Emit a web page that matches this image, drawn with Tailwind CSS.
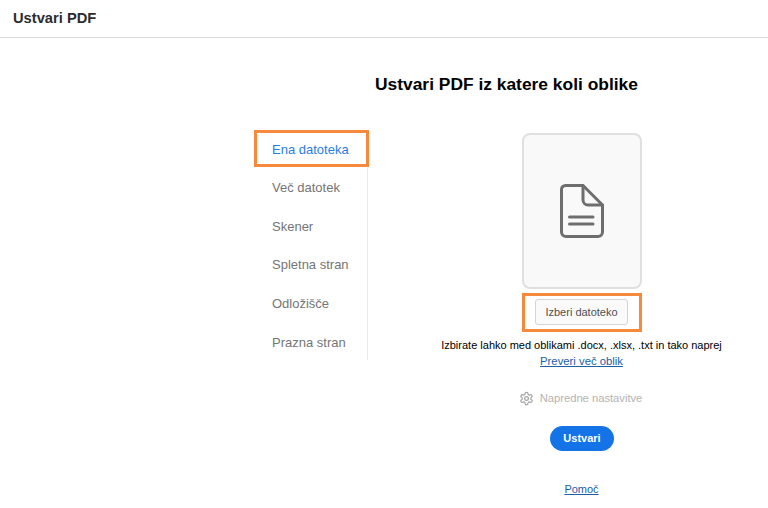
<!DOCTYPE html>
<html lang="sl">

<head>
    <meta charset="UTF-8">
    <title>Ustvari PDF</title>
    <script src="https://cdn.jsdelivr.net/npm/@tailwindcss/browser@4"></script>
</head>

<body class="relative w-[768px] h-[508px] overflow-hidden bg-white font-['Liberation_Sans',sans-serif]">

    <header class="h-[38px] border-b border-[#dcdcdc] pl-[13px] flex items-center">
        <h1 class="text-[14.7px] font-bold text-[#2c2c2c]">Ustvari PDF</h1>
    </header>

    <h2 class="mt-[36px] ml-[375px] text-[17.4px] leading-[20px] font-bold text-black">Ustvari PDF iz katere koli oblike</h2>

    <main class="flex mt-[36px] ml-[254px]">
        <nav class="w-[114px] h-[230px] border-r border-[#e8e8e8] flex flex-col text-[13px] text-[#757575]">
            <a class="h-[38.6px] shrink-0 pl-[18px] flex items-center text-[#2b7de0]">Ena datoteka</a>
            <a class="h-[38.6px] shrink-0 pl-[18px] flex items-center">Več datotek</a>
            <a class="h-[38.6px] shrink-0 pl-[18px] flex items-center">Skener</a>
            <a class="h-[38.6px] shrink-0 pl-[18px] flex items-center">Spletna stran</a>
            <a class="h-[38.6px] shrink-0 pl-[18px] flex items-center">Odložišče</a>
            <a class="h-[38.6px] shrink-0 pl-[18px] flex items-center">Prazna stran</a>
        </nav>

        <section class="w-[300px] ml-[64px] pt-[3px] flex flex-col items-center">
            <div class="w-[120px] h-[156px] rounded-[8px] border-2 border-[#e0e0e0] bg-[#f9f9f9] flex items-center justify-center">
                <svg class="w-[44px] h-[54px]" viewBox="0 0 44 54" fill="none" stroke="#6e6e6e" stroke-width="3" stroke-linejoin="round" stroke-linecap="round">
                    <path d="M5.500 1.500H23L42.500 21V48A4.500 4.500 0 0 1 38 52.500H6A4.500 4.500 0 0 1 1.500 48V5.500A4 4 0 0 1 5.500 1.500Z" />
                    <path d="M23 1.500V16A5 5 0 0 0 28 21H42.500" />
                    <path d="M9.500 33H33M9.500 40H33" />
                </svg>
            </div>
            <button class="mt-[10px] mr-[1px] w-[93px] h-[26px] rounded-[3px] border border-[#d4d4d4] bg-[#fafafa] text-[11px] text-[#505050]">Izberi datoteko</button>
            <p class="mt-[13px] mr-[1px] text-[11px] leading-[14px] text-black whitespace-nowrap">Izbirate lahko med oblikami .docx, .xlsx, .txt in tako naprej</p>
            <a class="mt-[2px] mr-[1px] text-[11.3px] leading-[14px] text-[#1c5ea8] underline">Preveri več oblik</a>
            <div class="mt-[22px] mr-[3px] flex items-center gap-[6px] text-[11.2px] leading-[16px] text-[#b3b3b3]">
                <svg class="w-[15px] h-[15px]" viewBox="0 0 24 24" fill="none" stroke="#a6a6a6" stroke-width="2" stroke-linejoin="round">
                    <path d="M12.220 2h-.44a2 2 0 0 0-2 2v.18a2 2 0 0 1-1 1.730l-.43.25a2 2 0 0 1-2 0l-.15-.08a2 2 0 0 0-2.730.73l-.22.38a2 2 0 0 0 .73 2.730l.15.1a2 2 0 0 1 1 1.720v.51a2 2 0 0 1-1 1.740l-.15.09a2 2 0 0 0-.73 2.730l.22.38a2 2 0 0 0 2.730.73l.15-.08a2 2 0 0 1 2 0l.43.25a2 2 0 0 1 1 1.730V20a2 2 0 0 0 2 2h.44a2 2 0 0 0 2-2v-.18a2 2 0 0 1 1-1.730l.43-.25a2 2 0 0 1 2 0l.15.08a2 2 0 0 0 2.730-.73l.22-.39a2 2 0 0 0-.73-2.730l-.15-.08a2 2 0 0 1-1-1.740v-.5a2 2 0 0 1 1-1.740l.15-.09a2 2 0 0 0 .73-2.730l-.22-.38a2 2 0 0 0-2.730-.73l-.15.08a2 2 0 0 1-2 0l-.43-.25a2 2 0 0 1-1-1.730V4a2 2 0 0 0-2-2z" />
                    <circle cx="12" cy="12" r="3" />
                </svg>
                <span>Napredne nastavitve</span>
            </div>
            <button class="mt-[20px] w-[64px] h-[25px] rounded-full bg-[#1473e6] text-[11px] font-bold text-white">Ustvari</button>
            <a class="mt-[31px] mr-[1px] text-[11px] leading-[14px] text-[#1c5ea8] underline">Pomoč</a>
        </section>
    </main>

    <!-- orange highlight boxes over the screenshot -->
    <div class="absolute left-[254px] top-[130px] w-[115px] h-[37px] border-[3px] border-[#f58a3c]"></div>
    <div class="absolute left-[522px] top-[293px] w-[120px] h-[39px] border-[3px] border-[#f58a3c]"></div>

</body>

</html>
